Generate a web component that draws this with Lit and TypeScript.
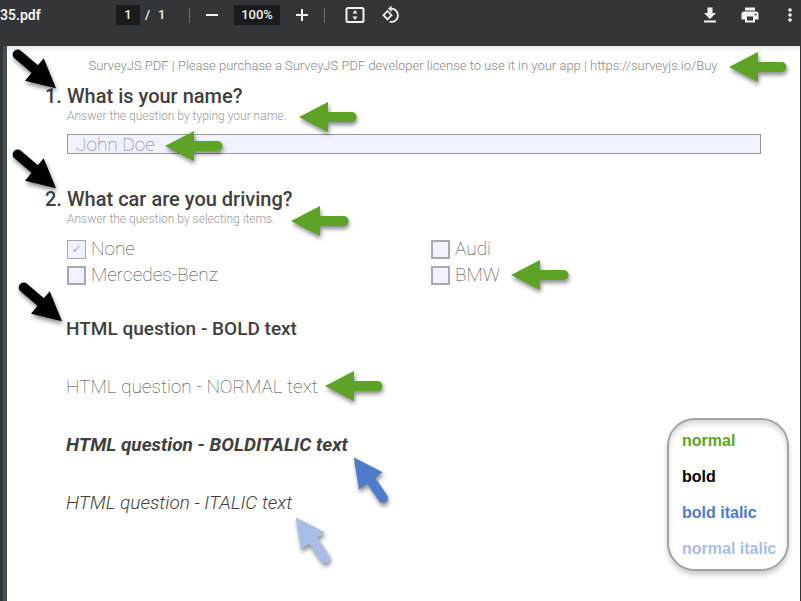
import { LitElement, html, css, svg } from "lit";
import { customElement } from "lit/decorators.js";
import { styleMap } from "lit/directives/style-map.js";

type ArrowKind = "green" | "black" | "blue" | "pale";

const ARROWS: { kind: ArrowKind; x: number; y: number }[] = [
  { kind: "green", x: 729, y: 52 },
  { kind: "green", x: 299, y: 102 },
  { kind: "green", x: 165, y: 131 },
  { kind: "green", x: 291, y: 206 },
  { kind: "green", x: 511, y: 260 },
  { kind: "green", x: 325, y: 371 },
  { kind: "black", x: 12, y: 48 },
  { kind: "black", x: 12, y: 148 },
  { kind: "black", x: 18, y: 281 },
  { kind: "blue", x: 353, y: 457 },
  { kind: "pale", x: 295, y: 517 },
];

const SHAPES = {
  left: svg`<path d="M0 15 29 0V30Z"/><path d="M26 15H52.500" stroke-width="10"/>`,
  downRight: svg`<path d="M44 40.300 31.700 10.300 13 32.700Z"/><path d="M5.700 6.500 25 23" stroke-width="10"/>`,
  upLeft: svg`<path d="M.7.300 29.700 15.300 6 32.700Z"/><path d="M17 22 30 41" stroke-width="10"/>`,
};

/** Pointer drawn over the document, colour coded by font style. */
@customElement("note-arrow")
class NoteArrow extends LitElement {
  static properties = { kind: { type: String } };
  declare kind: ArrowKind;

  static styles = css`
    :host { display: block; }
    svg {
      display: block;
      width: 60px;
      height: 50px;
      overflow: visible;
      stroke-linecap: round;
      filter: drop-shadow(1px 3px 2px rgba(0, 0, 0, 0.45));
    }
    .green { fill: #5ea226; stroke: #5ea226; }
    .black { fill: #000; stroke: #000; }
    .blue { fill: #4e7ccb; stroke: #4e7ccb; }
    .pale { fill: #a9bee6; stroke: #a9bee6; }
    path { stroke-width: 0; }
    path[stroke-width] { stroke-width: 10px; }
  `;

  render() {
    const shape =
      this.kind === "green" ? SHAPES.left : this.kind === "black" ? SHAPES.downRight : SHAPES.upLeft;
    return html`<svg class=${this.kind} viewBox="0 0 60 50" aria-hidden="true">${shape}</svg>`;
  }
}

@customElement("pdf-toolbar")
class PdfToolbar extends LitElement {
  static styles = css`
    :host {
      display: grid;
      grid-template-columns: 116px 1fr auto;
      align-items: center;
      height: 46px;
      padding: 0 1px 16px 0;
      box-sizing: border-box;
      background: #323639;
      color: #f1f1f1;
      font: 500 13px/20px Roboto, sans-serif;
    }
    .name { margin-left: -8px; font-size: 14px; font-weight: 600; }
    .group { display: flex; align-items: center; }
    .field {
      box-sizing: border-box;
      height: 20px;
      padding: 0;
      border: 0;
      background: #191b1c;
      color: inherit;
      font: inherit;
      text-align: center;
    }
    .page { width: 24px; }
    .zoom { width: 46px; }
    .total { display: flex; gap: 8px; margin-left: 5px; width: 44px; }
    .rule { width: 1px; height: 15px; background: #6d7073; }
    button {
      display: grid;
      place-items: center;
      width: 20px;
      height: 20px;
      padding: 0;
      border: 0;
      background: none;
      color: inherit;
    }
    svg { display: block; width: 20px; height: 20px; overflow: visible; }
    .minus { margin: 0 12px; }
    .plus { margin: 0 12px; }
    .fit { margin: 0 16px 0 20px; }
    .actions { gap: 20px; }
  `;

  render() {
    return html`
      <span class="name">535.pdf</span>
      <div class="group">
        <input class="field page" aria-label="Page" value="1" />
        <span class="total"><span>/</span><span>1</span></span>
        <span class="rule"></span>
        <button class="minus" aria-label="Zoom out">
          <svg viewBox="0 0 20 20"><path d="M4 10H16" stroke="currentColor" stroke-width="2" /></svg>
        </button>
        <input class="field zoom" aria-label="Zoom level" value="100%" />
        <button class="plus" aria-label="Zoom in">
          <svg viewBox="0 0 20 20"><path d="M4 10H16M10 4V16" stroke="currentColor" stroke-width="2" /></svg>
        </button>
        <span class="rule"></span>
        <button class="fit" aria-label="Fit to page">
          <svg viewBox="0 0 20 20" fill="currentColor">
            <rect x="1.500" y="3" width="17" height="14" rx="1.500" fill="none" stroke="currentColor" stroke-width="2" />
            <path d="M10 5 12.500 8.500H7.500ZM10 15 12.500 11.500H7.500Z" />
          </svg>
        </button>
        <button aria-label="Rotate counterclockwise">
          <svg viewBox="0 0 20 20" fill="none" stroke="currentColor" stroke-width="1.800">
            <path d="M6.500 6 10.500 10.200 6.500 14.400 2.500 10.200Z" />
            <path d="M9.500 3.800A6.600 6.600 0 1 1 8.700 16.700" />
            <path d="M10.500.600V7L7 3.800Z" fill="currentColor" stroke="none" />
          </svg>
        </button>
      </div>
      <div class="group actions">
        <button aria-label="Download">
          <svg viewBox="0 0 20 20" fill="currentColor">
            <path d="M7.500 2.500H12.500V8H16L10 14 4 8H7.500ZM4 15.500H16V17.500H4Z" />
          </svg>
        </button>
        <button aria-label="Print">
          <svg viewBox="0 0 20 20" fill="currentColor" fill-rule="evenodd">
            <path d="M5 2.500H15V5.500H5ZM4 6.500H16A2.500 2.500 0 0 1 18.500 9V14.500H15V17.500H5V14.500H1.500V9A2.500 2.500 0 0 1 4 6.500ZM7 11.500V15.500H13V11.500ZM15.500 8.500A1 1 0 1 0 15.500 10.500 1 1 0 1 0 15.500 8.500Z" />
          </svg>
        </button>
        <button aria-label="More actions">
          <svg viewBox="0 0 20 20" fill="currentColor">
            <circle cx="10" cy="5" r="1.800" /><circle cx="10" cy="10" r="1.800" /><circle cx="10" cy="15" r="1.800" />
          </svg>
        </button>
      </div>
    `;
  }
}

@customElement("app-root")
class AppRoot extends LitElement {
  static styles = css`
    :host {
      display: flex;
      flex-direction: column;
      position: relative;
      min-height: 100vh;
      overflow: hidden;
      background: #323639;
    }
    .sheet {
      flex: 1;
      box-sizing: border-box;
      margin: 0 1px 0 7px;
      padding: 10px 39px 40px 60px;
      background: linear-gradient(#e8e8e8, #fff 6px);
      color: #404040;
      font: 100 19px/24px Roboto, sans-serif;
      box-shadow: -4px 0 0 #4a4e51;
    }
    .license {
      margin: 0 0 8px;
      padding-right: 22px;
      color: #888;
      font-weight: 300;
      font-size: 13px;
      line-height: 20px;
      text-align: center;
    }
    h2 {
      display: flex;
      margin: 0 0 0 -22px;
      font-weight: 500;
      font-size: 20px;
      line-height: 24px;
    }
    .number { width: 22px; flex: none; }
    .hint { margin: 0; color: #999; font-weight: 300; font-size: 12px; line-height: 16px; }
    .text {
      display: block;
      box-sizing: border-box;
      width: 100%;
      height: 20px;
      margin: 10px 0 33px;
      padding: 0 8px;
      border: 1px solid #98999e;
      border-radius: 0;
      background: #f0f2ff;
      color: #74768a;
      font: 100 19px/18px Roboto, sans-serif;
    }
    fieldset { margin: 0; padding: 0; border: 0; min-width: 0; }
    legend { padding: 0; }
    .choices {
      display: grid;
      grid-template-columns: 364px 1fr;
      row-gap: 2px;
      margin: 10px 0 30px;
    }
    label { display: flex; align-items: center; gap: 5px; }
    .box {
      appearance: none;
      box-sizing: border-box;
      display: grid;
      place-items: center;
      width: 19px;
      height: 19px;
      margin: 0;
      border: 2px solid #a9aab0;
      background: #f0f2ff;
    }
    .box:checked { border-width: 1px; }
    .box:checked::before {
      content: "✓";
      color: #a9aab8;
      font: 12px/14px "DejaVu Sans", sans-serif;
    }
    .line { margin: 0 0 34px -1px; }
    .bold { font-weight: 500; }
    .bolditalic { font-weight: 700; font-style: italic; }
    .italic { font-weight: 300; font-style: italic; }
    .legend {
      position: absolute;
      right: 12px;
      top: 418px;
      box-sizing: border-box;
      width: 122px;
      height: 153px;
      margin: 0;
      padding: 11px 0 0 13px;
      border: 2px solid #a3a3a3;
      border-radius: 28px;
      background: #fff;
      box-shadow: 0 4px 5px rgba(0, 0, 0, 0.2), inset 0 4px 5px rgba(0, 0, 0, 0.15);
      list-style: none;
      white-space: nowrap;
      font: bold 16px/20px "Liberation Sans", Arial, sans-serif;
    }
    .legend li { margin-bottom: 16px; }
    .k-green { color: #5ea226; }
    .k-black { color: #000; }
    .k-blue { color: #4e7ccb; }
    .k-pale { color: #a9bee6; }
    note-arrow { position: absolute; pointer-events: none; }
  `;

  render() {
    return html`
      <pdf-toolbar></pdf-toolbar>
      <main class="sheet">
        <p class="license">
          SurveyJS PDF | Please purchase a SurveyJS PDF developer license to use it in your app | https://surveyjs.io/Buy
        </p>
        <h2 id="q1"><span class="number">1.</span>What is your name?</h2>
        <p class="hint">Answer the question by typing your name.</p>
        <input class="text" aria-labelledby="q1" value="John Doe" />
        <fieldset>
          <legend>
            <h2><span class="number">2.</span>What car are you driving?</h2>
          </legend>
          <p class="hint">Answer the question by selecting items.</p>
          <div class="choices">
            <label><input class="box" type="checkbox" checked />None</label>
            <label><input class="box" type="checkbox" />Audi</label>
            <label><input class="box" type="checkbox" />Mercedes-Benz</label>
            <label><input class="box" type="checkbox" />BMW</label>
          </div>
        </fieldset>
        <p class="line bold">HTML question - BOLD text</p>
        <p class="line">HTML question - NORMAL text</p>
        <p class="line bolditalic">HTML question - BOLDITALIC text</p>
        <p class="line italic">HTML question - ITALIC text</p>
      </main>
      <ul class="legend">
        <li class="k-green">normal</li>
        <li class="k-black">bold</li>
        <li class="k-blue">bold italic</li>
        <li class="k-pale">normal italic</li>
      </ul>
      ${ARROWS.map(
        (a) => html`<note-arrow .kind=${a.kind} style=${styleMap({ left: `${a.x}px`, top: `${a.y}px` })}></note-arrow>`
      )}
    `;
  }
}
